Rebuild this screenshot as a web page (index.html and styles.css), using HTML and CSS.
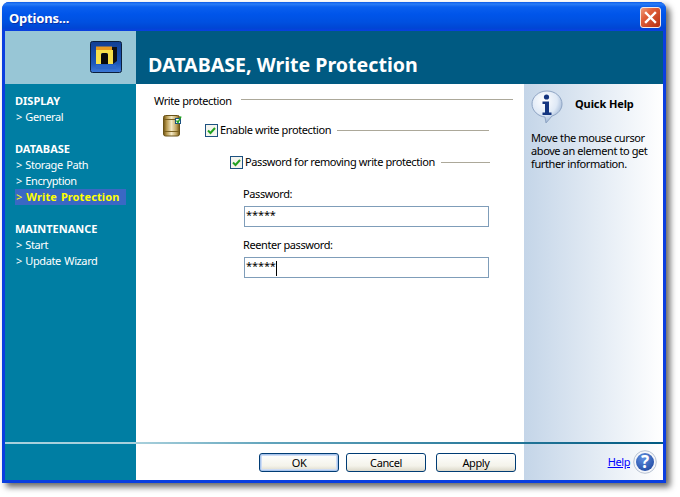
FILE: index.html
```html
<!DOCTYPE html>
<html lang="en">
<head>
<meta charset="utf-8">
<title>Options...</title>
<link rel="stylesheet" href="styles.css">
</head>
<body>
<div class="window">
  <div class="titlebar">
    <span class="title">Options...</span>
    <svg class="close" width="21" height="21" viewBox="0 0 21 21">
      <defs><linearGradient id="cg" x1="0" y1="0" x2="1" y2="1"><stop offset="0" stop-color="#f0a080"/><stop offset=".35" stop-color="#e0603a"/><stop offset="1" stop-color="#b52d10"/></linearGradient></defs>
      <rect x=".5" y=".5" width="20" height="20" rx="2.5" fill="url(#cg)" stroke="#f4e8e4"/>
      <path d="M6 6l9 9M15 6l-9 9" stroke="#fff" stroke-width="2.4" stroke-linecap="square"/>
    </svg>
  </div>
  <div class="client">
    <div class="head">
      <div class="head-logo">
        <svg width="33" height="33" viewBox="0 0 33 33">
          <defs><linearGradient id="lg" x1="0" y1="0" x2="0" y2="1"><stop offset="0" stop-color="#123f94"/><stop offset=".7" stop-color="#1c57b8"/><stop offset="1" stop-color="#3d7ad8"/></linearGradient></defs>
          <rect x=".5" y=".5" width="31" height="31" rx="2" fill="url(#lg)" stroke="#0b1f3c"/>
          <path d="M21 6h6v14l-4 3h-3z" fill="#111"/>
          <rect x="6" y="5.500" width="16" height="3.500" fill="#e89a20"/>
          <path d="M6 9h17v14h-5v-9q0-2-2-2h-3q-2 0-2 2v9h-5z" fill="#f8e04a"/>
          <path d="M11 23v-9q0-2 2-2h3q2 0 2 2v9z" fill="#0a0a0a"/>
          <rect x="6" y="24" width="20" height="4" fill="#2a66c8"/>
        </svg>
      </div>
      <h1 class="head-title">DATABASE, Write Protection</h1>
    </div>
    <div class="body">
      <nav class="nav">
        <div class="nav-group">
          <div class="nav-head">DISPLAY</div>
          <div class="nav-item">&gt; General</div>
        </div>
        <div class="nav-group">
          <div class="nav-head">DATABASE</div>
          <div class="nav-item">&gt; Storage Path</div>
          <div class="nav-item">&gt; Encryption</div>
          <div class="nav-item active">&gt; <b>Write Protection</b></div>
        </div>
        <div class="nav-group">
          <div class="nav-head">MAINTENANCE</div>
          <div class="nav-item">&gt; Start</div>
          <div class="nav-item">&gt; Update Wizard</div>
        </div>
      </nav>
      <main class="pane">
        <div class="section">
          <span>Write protection</span><i class="rule"></i>
        </div>
        <div class="row-enable">
          <svg class="barrel" width="20" height="23" viewBox="0 0 20 23">
            <defs><linearGradient id="bg" x1="0" y1="0" x2="1" y2="0"><stop offset="0" stop-color="#6e5210"/><stop offset=".2" stop-color="#b89a50"/><stop offset=".5" stop-color="#f2e8c4"/><stop offset=".8" stop-color="#c0a460"/><stop offset="1" stop-color="#6e5210"/></linearGradient></defs>
            <rect x=".5" y=".5" width="16" height="20.500" rx="2" fill="url(#bg)" stroke="#6a5318"/>
            <path d="M1 4.500h15M1 16.500h15" stroke="#7a6020"/>
            <rect x="12.500" y="3.500" width="5" height="5" fill="#fff" stroke="#1c5180"/>
            <path d="M13.500 5.500l1.500 2 3-6" fill="none" stroke="#21a121" stroke-width="1.500"/>
          </svg>
          <label class="check enable">
            <svg class="box" width="13" height="13" viewBox="0 0 13 13"><rect x=".5" y=".5" width="12" height="12" fill="#f4f4ee" stroke="#1c5180"/><path d="M3 6.500l2.500 2.500 4.500-5" fill="none" stroke="#21a121" stroke-width="2"/></svg>
            <span>Enable write protection</span><i class="rule"></i>
          </label>
        </div>
        <label class="check row-pass">
          <svg class="box" width="13" height="13" viewBox="0 0 13 13"><rect x=".5" y=".5" width="12" height="12" fill="#f4f4ee" stroke="#1c5180"/><path d="M3 6.500l2.500 2.500 4.500-5" fill="none" stroke="#21a121" stroke-width="2"/></svg>
          <span>Password for removing write protection</span><i class="rule"></i>
        </label>
        <div class="field-label first">Password:</div>
        <div class="field">*****</div>
        <div class="field-label">Reenter password:</div>
        <div class="field">*****<i class="caret"></i></div>
      </main>
      <aside class="help">
        <div class="help-head">
          <svg width="33" height="34" viewBox="0 0 33 34">
            <defs><radialGradient id="ig" cx=".4" cy=".3" r=".8"><stop offset="0" stop-color="#fff"/><stop offset=".55" stop-color="#dfe9f6"/><stop offset="1" stop-color="#7f9cc4"/></radialGradient></defs>
            <path d="M16 1C7.500 1 1 7 1 14c0 7 6.500 12.500 13 13l1 6 6-7c6-2 10-6.500 10-12C31 7 24.500 1 16 1z" fill="url(#ig)" stroke="#8fa5c4"/>
            <circle cx="15.500" cy="7" r="2.600" fill="#14357f"/>
            <path d="M11.500 11.500h6.500v11h2.500v2.500h-9v-2.500h2.500v-8.500h-2.500z" fill="#14357f"/>
          </svg>
          <strong>Quick Help</strong>
        </div>
        <p class="help-text">Move the mouse cursor above an element to get further information.</p>
      </aside>
    </div>
    <div class="sep"></div>
    <div class="foot">
      <div class="foot-side"></div>
      <div class="foot-buttons">
        <button class="btn default">OK</button>
        <button class="btn">Cancel</button>
        <button class="btn">Apply</button>
      </div>
      <div class="foot-help">
        <a href="#" class="help-link">Help</a>
        <svg width="24" height="24" viewBox="0 0 24 24">
          <defs><radialGradient id="qg" cx=".4" cy=".3" r=".8"><stop offset="0" stop-color="#5f8fe0"/><stop offset="1" stop-color="#1f48a0"/></radialGradient></defs>
          <circle cx="12" cy="12" r="11.300" fill="#f4f6fa" stroke="#b9c4d4"/>
          <circle cx="12" cy="12" r="9" fill="url(#qg)"/>
          <text x="12" y="17.500" text-anchor="middle" class="q">?</text>
        </svg>
      </div>
    </div>
  </div>
</div>
</body>
</html>
```

FILE: styles.css
```css
* { box-sizing: border-box; }
html, body { margin: 0; padding: 0; background: #fff; }
body { padding: 2px 0 0 2px; font: 11px/16px "Noto Sans", "Open Sans", sans-serif; letter-spacing: -.4px; color: #000; width: 680px; height: 497px; overflow: hidden; }
.rule { display: block; flex: 1; height: 1px; background: #aca899; }

.window {
  width: 664px; height: 481px;
  border-radius: 7px 7px 0 0;
  background: #0a3ee0;
  box-shadow: 4px 4px 6px rgba(0,0,0,.6);
  padding: 0 3px 3px 3px;
  display: flex; flex-direction: column;
}
.titlebar {
  height: 29px; flex: none;
  margin: 0 -3px; padding: 5px 5px 0 7px;
  display: flex; justify-content: space-between; align-items: flex-start;
  border-radius: 7px 7px 0 0;
  background: linear-gradient(#0a5ae8 0, #2a7cf6 2px, #0a5fee 5px, #0055ea 12px, #0050e0 20px, #0046d4 26px, #0a3ee0 29px);
}
.title { font: bold 13px/22px "Noto Sans", sans-serif; color: #fff; letter-spacing: -.2px; text-shadow: 1px 1px 0 #0a2fa8; }
.close { display: block; }

.client { flex: 1; display: flex; flex-direction: column; background: #fff; min-height: 0; }
.head { height: 53px; flex: none; display: flex; background: #005a82; }
.head-logo { width: 131px; background: #98c6d6; padding: 10px 0 0 85px; }
.head-logo svg { display: block; }
.head-title { margin: 0; padding-left: 12px; font: bold 19.600px/68px "Noto Sans", sans-serif; letter-spacing: 0; color: #fff; }

.body { flex: 1; display: flex; min-height: 0; }
.nav { width: 131px; background: #007ea3; color: #fff; padding: 9px 10px 0 10px; }
.nav-group { margin-bottom: 16px; }
.nav-head { font-weight: 700; letter-spacing: 0; }
.nav-item { padding-left: 1px; word-spacing: 1px; }
.nav-item.active { color: #ffff00; background: #3a68c4; }
.nav-item.active b { margin-left: 1px; letter-spacing: .1px; }

.pane { width: 388px; background: #fff; padding-top: 9px; }
.section { display: flex; align-items: flex-start; padding: 0 11px 0 18px; height: 16px; gap: 9px; }
.section .rule { margin-top: 6px; }
.row-enable { display: flex; margin-top: 6px; padding: 0 35px 0 27px; height: 23px; }
.barrel { display: block; flex: none; }
.check { display: flex; align-items: center; height: 16px; }
.check .box { flex: none; margin-right: 2px; display: block; }
.check .rule { margin-left: 6px; }
.check.enable { flex: 1; margin: 7px 0 0 22px; }
.row-pass { margin-top: 16px; padding: 0 34px 0 94px; }
.field-label { margin: 10px 0 0 107px; height: 16px; }
.field-label.first { margin-top: 16px; }
.field {
  margin: 4px 0 0 108px; width: 245px; height: 21px;
  border: 1px solid #7f9db9; padding: 0 0 0 1px;
  line-height: 16px; letter-spacing: -.1px;
  display: flex; align-items: flex-start; white-space: pre;
}
.caret { display: block; width: 1px; height: 15px; margin: 3px 0 0 0; background: #000; }

.help { flex: 1; background: linear-gradient(90deg, #c4d5e8, #fff); padding: 6px 4px 0 7px; }
.help-head { display: flex; height: 33px; }
.help-head svg { display: block; flex: none; }
.help-head strong { margin: 6px 0 0 11px; font-weight: 700; letter-spacing: -.1px; }
.help-text { margin: 8px 0 0 0; line-height: 13px; }

.sep { height: 2px; flex: none; background: linear-gradient(90deg, #a8d0dc 0, #a8d0dc 20%, #62a4bc 40%, #005a82 100%); }
.foot { height: 36px; flex: none; display: flex; }
.foot-side { width: 131px; background: #007ea3; }
.foot-buttons { width: 388px; display: flex; padding: 9px 0 0 123px; gap: 7px; background: #fff; }
.btn {
  width: 80px; height: 19px; padding: 0; margin: 0;
  font: 11px/16px "Noto Sans", sans-serif; letter-spacing: -.4px; color: #000;
  border: 1px solid #003c74; border-radius: 3px;
  background: linear-gradient(#fff, #f4f3ea 70%, #dcd8ca);
}
.btn:last-child { margin-left: 3px; }
.btn.default { box-shadow: inset 0 0 0 1px #a8c4ec, inset 0 0 0 2px #cedcf4; }
.foot-help { flex: 1; background: linear-gradient(90deg, #c4d5e8, #fff); display: flex; justify-content: flex-end; align-items: flex-start; padding: 6px 6px 0 0; gap: 3px; }
.help-link { color: #0000ff; text-decoration: underline; margin-top: 4px; }
.foot-help svg { display: block; }
.q { font: bold 17px "Noto Sans", sans-serif; fill: #fff; letter-spacing: 0; }
```
